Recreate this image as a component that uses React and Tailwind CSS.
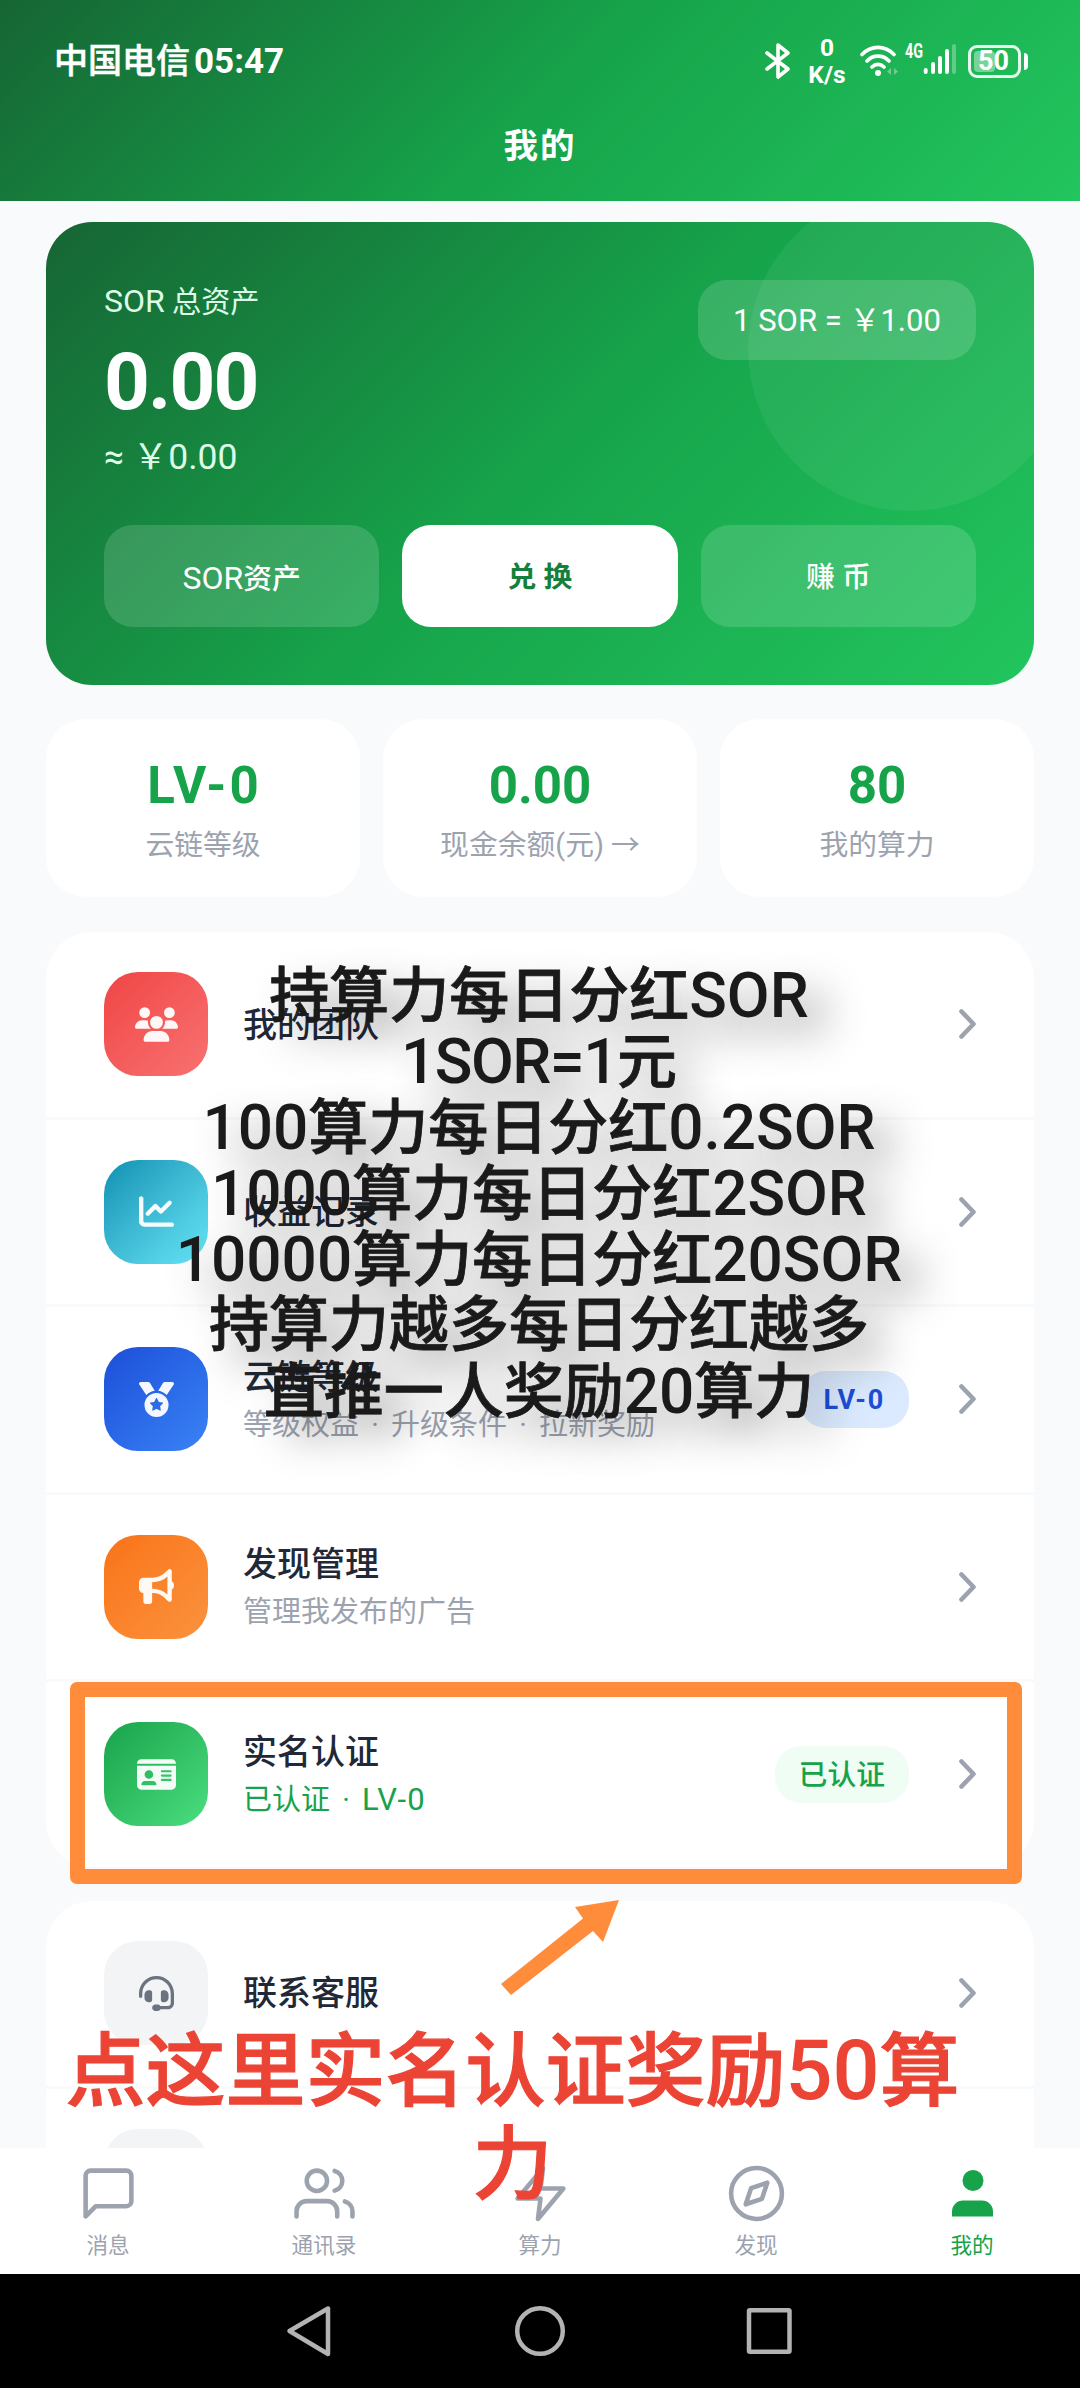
import React from 'react';
import { FiMessageSquare, FiUsers, FiZap, FiCompass } from 'react-icons/fi';
import { FaUsers, FaChartLine, FaMedal, FaBullhorn, FaIdCard, FaHeadset } from 'react-icons/fa6';

const menuItems = [
  { title: '我的团队', icon: FaUsers, size: 43, tile: 'from-[#ef4444] to-[#f87171]' },
  { title: '收益记录', icon: FaChartLine, size: 35, tile: 'from-[#0891b2] to-[#67e8f9]' },
  {
    title: '云链等级',
    sub: '等级权益 · 升级条件 · 拉新奖励',
    icon: FaMedal,
    size: 35,
    tile: 'from-[#1d4ed8] to-[#3b82f6]',
    badge: 'LV-0',
    badgeStyle: 'bg-[#dbeafe] text-[#1d4ed8] text-[27px] font-bold tracking-[1.8px]',
  },
  { title: '发现管理', sub: '管理我发布的广告', icon: FaBullhorn, size: 35, tile: 'from-[#f97316] to-[#fb923c]' },
  {
    title: '实名认证',
    sub: '已认证 · LV-0',
    subStyle: 'text-[#16a34a]',
    icon: FaIdCard,
    size: 39,
    tile: 'from-[#16a34a] to-[#4ade80]',
    badge: '已认证',
    badgeStyle: 'bg-[#f0fdf4] text-[#16a34a] text-[28.8px] font-medium',
  },
];

const notes = [
  '持算力每日分红SOR',
  '1SOR=1元',
  '100算力每日分红0.2SOR',
  '1000算力每日分红2SOR',
  '10000算力每日分红20SOR',
  '持算力越多每日分红越多',
  '直推一人奖励20算力',
];

// latin runs are set slightly larger than the chinese glyphs
const Mixed = ({ text, latin = 'text-[1.035em]', cjk = '' }) =>
  text.split(/([\x21-\x7e]+)/).map((part, i) => (
    <span key={i} className={i % 2 ? latin : cjk}>
      {part}
    </span>
  ));

const StatusBar = () => (
  <div className="flex h-[122px] items-center justify-between pl-[54px] pr-[52px]">
    <div className="flex items-center gap-[4px] text-[34px] leading-none">
      <span className="font-medium [-webkit-text-stroke:0.5px_white]">中国电信</span>
      <span className="text-[35px] font-bold">05:47</span>
    </div>
    <div className="flex items-center">
      <svg className="h-[36px] w-[26px]" viewBox="0 0 26 36" fill="none" stroke="white" strokeWidth="3.6" strokeLinejoin="round" strokeLinecap="round">
        <path d="M2 10l21 16-10 8V2l10 8L2 26" />
      </svg>
      <div className="ml-[17px] flex w-[38px] flex-col items-center text-[24.500px] font-bold leading-[27px]">
        <span>0</span>
        <span>K/s</span>
      </div>
      <svg className="ml-[14px] h-[34px] w-[42px]" viewBox="0 0 42 34" fill="none" stroke="white" strokeWidth="3.6" strokeLinecap="round">
        <path d="M2 10.500C11 1 25 1 34 10.500M7 17C13 10.500 23 10.500 29 17M12 23C15.500 19.500 20.500 19.500 24 23" />
        <circle cx="18" cy="29" r="3" fill="white" stroke="none" />
        <path d="M31 24v7l-4-3.500zM34 24v7l4-3.500z" fill="white" fillOpacity=".35" stroke="none" />
      </svg>
      <svg className="ml-[3px] h-[40px] w-[52px] overflow-visible" viewBox="0 0 52 40">
        <text x="0" y="16.500" fill="white" fontSize="20" fontWeight="700" textLength="18" lengthAdjust="spacingAndGlyphs">4G</text>
        <g stroke="white" strokeWidth="4" strokeLinecap="round">
          <path d="M20.700 29v2M28 23v8M35 17v14M42 10v21" />
          <path d="M49 5v26" strokeOpacity=".3" />
        </g>
      </svg>
      <div className="ml-[11px] flex h-[33px] w-[53px] items-center rounded-[9px] border-[3.500px] border-white/90 p-[3px]">
        <div className="relative h-full w-1/2 rounded-[4px] bg-white/40">
          <span className="absolute left-[4px] top-1/2 -translate-y-1/2 text-[27px] font-bold leading-none">50</span>
        </div>
      </div>
      <div className="ml-[3px] h-[17px] w-[4px] rounded-r bg-white" />
    </div>
  </div>
);

const Header = () => (
  <header className="h-[201px] bg-[linear-gradient(135deg,#166534_0%,#16a34a_50%,#22c55e_100%)] text-white">
    <StatusBar />
    <h1 className="text-center text-[34.5px] font-bold leading-[48px] tracking-[2px]">我的</h1>
  </header>
);

const AssetCard = () => (
  <section className="relative h-[463px] overflow-hidden rounded-[46px] bg-[linear-gradient(135deg,#166534_0%,#16a34a_50%,#22c55e_100%)] px-[58px] pt-[58px] text-white">
    <div className="absolute -top-[34px] left-[702px] h-[323px] w-[323px] rounded-full bg-white/[.06]" />
    <div className="relative flex h-[245px] items-start justify-between">
      <div>
        <div className="text-[29.200px] leading-[42px] text-[#dcfce7]">
          <Mixed text="SOR 总资产" latin="text-[32px]" />
        </div>
        <div className="mt-[14px] text-[80px] font-bold leading-[90px] tracking-[-1.8px]">0.00</div>
        <div className="mt-[8px] text-[35.500px] leading-[44px] text-[#dcfce7]">≈ ￥0.00</div>
      </div>
      <div className="flex h-[80px] w-[278px] items-center justify-center rounded-[29px] bg-white/[.15] pt-[2px] text-[31px]">
        1 SOR = ￥1.00
      </div>
    </div>
    <div className="relative grid grid-cols-3 gap-[23px] text-[28.8px] font-medium">
      <button className="h-[102px] rounded-[29px] bg-white/[.15] pt-[3px]">
        <Mixed text="SOR资产" latin="text-[32px] font-normal" />
      </button>
      <button className="h-[102px] rounded-[29px] bg-white pt-[3px] font-bold text-[#15803d]">兑 换</button>
      <button className="h-[102px] rounded-[29px] bg-white/[.15] pt-[3px]">赚 币</button>
    </div>
  </section>
);

const Stat = ({ value, label, valueStyle = '' }) => (
  <div className="flex h-[178px] flex-col items-center rounded-[40px] bg-white pt-[37px]">
    <div className={`text-[51px] font-bold leading-[60px] text-[#16a34a] ${valueStyle}`}>{value}</div>
    <div className="mt-[9px] text-[28.8px] leading-[40px] text-[#9ca3af]">{label}</div>
  </div>
);

const Chevron = () => (
  <svg className="h-[32px] w-[18px] shrink-0" viewBox="0 0 18 32" fill="none" stroke="#9ca3af" strokeWidth="4.600" strokeLinecap="round" strokeLinejoin="round">
    <path d="M3.500 3.500L15.500 16L3.500 28.500" />
  </svg>
);

const MenuRow = ({ item }) => {
  const Icon = item.icon;
  return (
    <div className="flex h-[187.500px] items-center border-b-[3px] border-[#f9fafb] px-[58px] last:border-b-0 last:pb-[3px]">
      <div className={`flex h-[104px] w-[104px] shrink-0 items-center justify-center rounded-[34px] bg-linear-135 ${item.tile}`}>
        <Icon size={item.size} className="text-white/95" />
      </div>
      <div className="ml-[35px] flex-1 pt-[1px]">
        <div className="text-[34px] font-medium leading-[46px] text-[#1f2937]">{item.title}</div>
        {item.sub && (
          <div className={`mt-[4px] text-[29px] leading-[42px] [word-spacing:5px] ${item.subStyle || 'text-[#9ca3af]'}`}>
            <Mixed text={item.sub} latin="text-[31px] tracking-[1.2px]" />
          </div>
        )}
      </div>
      {item.badge && (
        <div className={`mr-[49px] flex h-[57px] items-center rounded-[26px] px-[24px] pt-[2px] ${item.badgeStyle}`}>{item.badge}</div>
      )}
      <Chevron />
    </div>
  );
};

const tabs = [
  { label: '消息', icon: FiMessageSquare },
  { label: '通讯录', icon: FiUsers },
  { label: '算力', icon: FiZap },
  { label: '发现', icon: FiCompass },
];

const TabBar = () => (
  <nav className="relative grid h-[126px] grid-cols-5 bg-white text-[21.6px] text-[#9ca3af]">
    {tabs.map(({ label, icon: Icon }) => (
      <div key={label} className="flex flex-col items-center pt-[14.500px]">
        <Icon size={61} strokeWidth={1.8} />
        <span className="mt-[7px] leading-[30px]">{label}</span>
      </div>
    ))}
    <div className="flex flex-col items-center pt-[14.500px] text-[#16a34a]">
      <svg className="h-[61px] w-[61px]" viewBox="0 0 61 61" fill="currentColor">
        <circle cx="31" cy="17.500" r="10.500" />
        <path d="M10 53.500v-5a11 11 0 0 1 11-11h19a11 11 0 0 1 11 11v5z" />
      </svg>
      <span className="mt-[7px] leading-[30px]">我的</span>
    </div>
  </nav>
);

const SystemNav = () => (
  <div className="relative flex h-[114px] justify-center bg-black">
    <svg className="h-[114px] w-[540px]" viewBox="270 2274 540 114" fill="none" stroke="#b3b3b3" strokeWidth="4.500" strokeLinejoin="round">
      <path d="M328 2308.500V2354L289.500 2331z" />
      <circle cx="540" cy="2331" r="22.800" />
      <rect x="749" y="2310.300" width="40.500" height="41.500" rx="1" />
    </svg>
  </div>
);

const Annotations = () => (
  <div className="pointer-events-none absolute inset-0">
    <div className="absolute left-0 top-[963px] w-[1078px] text-center text-[60px] font-medium leading-[66px] text-[#1a1a1a] [text-shadow:20px_20px_40px_rgba(0,0,0,0.42)]">
      {notes.map((line) => (
        <div key={line} className="h-[66px] whitespace-nowrap">
          <Mixed
            text={line}
            latin={line.includes('=') ? 'text-[1.035em] tracking-[-1.5px]' : 'text-[1.035em]'}
            cjk="[-webkit-text-stroke:0.8px_#1a1a1a]"
          />
        </div>
      ))}
    </div>
    <div className="absolute left-[70px] top-[1682px] h-[202px] w-[952px] rounded-[7px] border-[15px] border-[#ff8c3a]" />
    <svg className="absolute left-[495px] top-[1895px] h-[105px] w-[130px]" viewBox="495 1895 130 105" fill="#ff8c3a">
      <path d="M619 1900L575 1907L583 1918.500L501 1984L511 1995L593 1931L603 1942z" />
    </svg>
    <div className="absolute left-[52px] top-[2023px] w-[921px] text-center text-[80px] font-medium leading-[95px] text-[#eb4435]">
      <div className="h-[95px] whitespace-nowrap">
        <Mixed text="点这里实名认证奖励50算" cjk="[-webkit-text-stroke:1.2px_#eb4435]" />
      </div>
      <div className="h-[95px] [-webkit-text-stroke:1.2px_#eb4435]">力</div>
    </div>
  </div>
);

export default function App() {
  return (
    <div className="relative flex h-[2388px] w-[1080px] flex-col overflow-hidden bg-[#f9fafb] font-[Roboto,'Noto_Sans_CJK_SC',sans-serif]">
      <Header />
      <main className="min-h-0 flex-1 overflow-hidden px-[45px] pt-[21px]">
        <div className="mx-[1px]">
          <AssetCard />
          <div className="mt-[34px] grid grid-cols-3 gap-[23px]">
            <Stat value="LV-0" label="云链等级" valueStyle="tracking-[3px] pl-[3px]" />
            <Stat value="0.00" label="现金余额(元) →" />
            <Stat value="80" label="我的算力" />
          </div>
          <div className="mt-[35px] h-[935px] overflow-hidden rounded-[46px] bg-white">
            {menuItems.map((item) => (
              <MenuRow key={item.title} item={item} />
            ))}
          </div>
          <div className="mt-[34px] rounded-t-[46px] bg-white">
            <div className="flex h-[187.500px] items-center border-b-[3px] border-[#f9fafb] px-[58px]">
              <div className="flex h-[104px] w-[104px] items-center justify-center rounded-[34px] bg-[#f3f4f6]">
                <FaHeadset size={35} className="text-[#6b7280]" />
              </div>
              <div className="ml-[35px] flex-1 text-[34px] font-medium text-[#1f2937]">联系客服</div>
              <Chevron />
            </div>
            <div className="px-[58px] pt-[40px]">
              <div className="h-[104px] w-[104px] rounded-[34px] bg-[#f3f4f6]" />
            </div>
          </div>
        </div>
      </main>
      <TabBar />
      <SystemNav />
      <Annotations />
    </div>
  );
}
